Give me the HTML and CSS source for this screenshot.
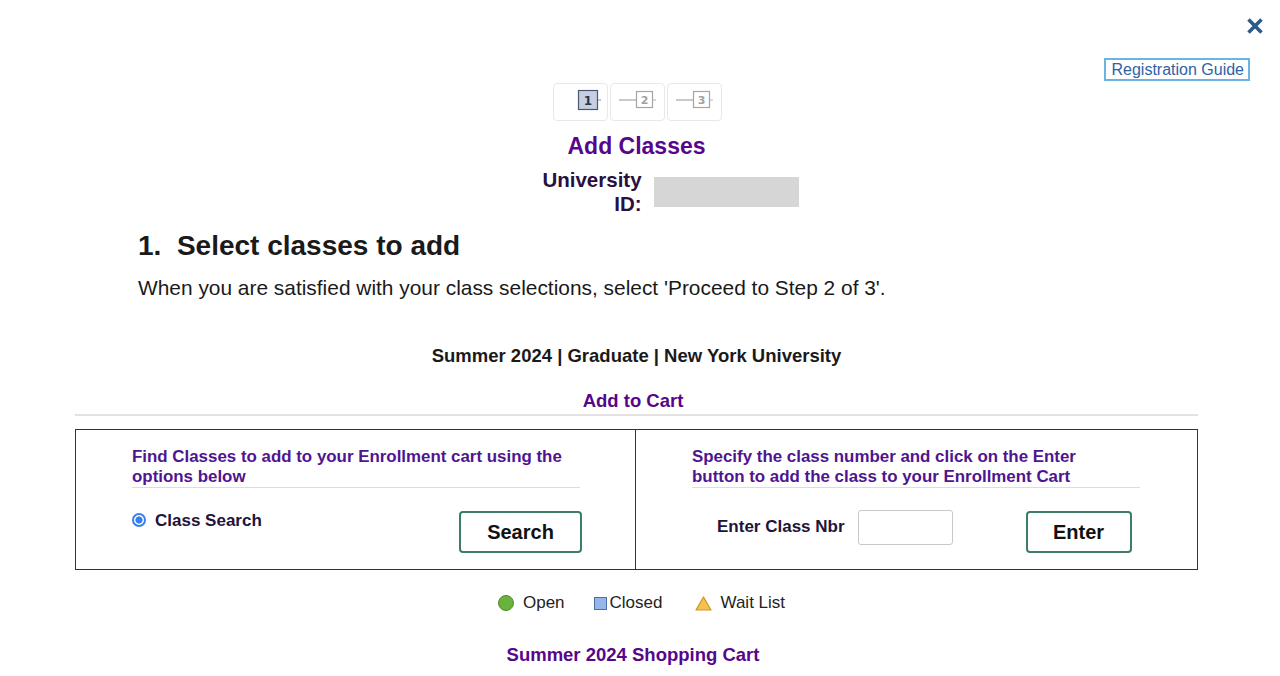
FILE: index.html
```html
<!DOCTYPE html>
<html>
<head>
	<title>Add Classes</title>
	<meta http-equiv="content-type" content="text/html; charset=UTF-8">
	<link rel="stylesheet" href="styles.css">
</head>
<body>
	<div class="topbar">
		<button class="close-btn" aria-label="Close">
			<svg width="18" height="18" viewBox="0 0 18 18">
				<path d="M2.5 2.5 L15.5 15.5 M15.5 2.5 L2.5 15.5" stroke="#2c5a8a" stroke-width="3.6" fill="none"/>
			</svg>
		</button>
	</div>
	<div class="guide-row">
		<a class="guide-link" href="#">Registration Guide</a>
	</div>

	<main class="content">
		<div class="steps">
			<div class="step">
				<svg width="53" height="36" viewBox="0 0 53 36">
					<rect x="24.5" y="6.5" width="19" height="19" fill="#c5cfe2" stroke="#4d5870" stroke-width="1.2"/>
					<line x1="44" y1="16" x2="47" y2="16" stroke="#8a93a6"/>
					<text x="34" y="20.5" text-anchor="middle" class="step-num active">1</text>
				</svg>
			</div>
			<div class="step">
				<svg width="53" height="36" viewBox="0 0 53 36">
					<line x1="8" y1="16" x2="25" y2="16" stroke="#a5a5a5" stroke-width="1.2"/>
					<rect x="25.5" y="7.5" width="16" height="16" fill="#fff" stroke="#a5a5a5" stroke-width="1.2"/>
					<line x1="42" y1="16" x2="45" y2="16" stroke="#b5b5b5"/>
					<text x="33.5" y="20" text-anchor="middle" class="step-num">2</text>
				</svg>
			</div>
			<div class="step">
				<svg width="53" height="36" viewBox="0 0 53 36">
					<line x1="8" y1="16" x2="25" y2="16" stroke="#a5a5a5" stroke-width="1.2"/>
					<rect x="25.5" y="7.5" width="16" height="16" fill="#fff" stroke="#a5a5a5" stroke-width="1.2"/>
					<line x1="42" y1="16" x2="45" y2="16" stroke="#b5b5b5"/>
					<text x="33.5" y="20" text-anchor="middle" class="step-num">3</text>
				</svg>
			</div>
		</div>

		<h1 class="page-title">Add Classes</h1>

		<div class="uid-row">
			<div class="uid-label">University<br>ID:</div>
			<div class="uid-value"></div>
		</div>

		<section class="intro">
			<h2>1.&nbsp; Select classes to add</h2>
			<p>When you are satisfied with your class selections, select 'Proceed to Step 2 of 3'.</p>
		</section>

		<div class="term">Summer 2024 | Graduate | New York University</div>

		<h3 class="section-title">Add to Cart</h3>

		<div class="cart-box">
			<div class="cart-cell">
				<div class="cell-inner">
					<div class="cell-head">Find Classes to add to your Enrollment cart using the options below</div>
					<div class="cell-row">
						<label class="radio"><span class="radio-dot"></span>Class Search</label>
						<button class="btn">Search</button>
					</div>
				</div>
			</div>
			<div class="cart-cell">
				<div class="cell-inner">
					<div class="cell-head">Specify the class number and click on the Enter button to add the class to your Enrollment Cart</div>
					<div class="cell-row enter-row">
						<label class="nbr-label" for="nbr">Enter Class Nbr</label>
						<input id="nbr" class="nbr-input" type="text">
						<button class="btn btn-enter">Enter</button>
					</div>
				</div>
			</div>
		</div>

		<div class="legend">
			<span class="legend-item"><span class="ico-open"></span>Open</span>
			<span class="legend-item closed"><span class="ico-closed"></span>Closed</span>
			<span class="legend-item wait">
				<svg class="ico-wait" width="17" height="15" viewBox="0 0 17 15">
					<path d="M8.5 1 L16 14 L1 14 Z" fill="#f4c24f" stroke="#c9952c" stroke-width="1.2" stroke-linejoin="round"/>
				</svg>Wait List</span>
		</div>

		<h3 class="cart-title">Summer 2024 Shopping Cart</h3>
	</main>
</body>
</html>
```

FILE: styles.css
```css
*{
	box-sizing: border-box;
}

body{
	margin: 0;
	font-family: "Liberation Sans", Arial, sans-serif;
	color: #1a1a1a;
	background: #fff;
}

.topbar{
	display: flex;
	justify-content: flex-end;
	padding: 17px 16px 0 0;
}

.close-btn{
	border: none;
	background: none;
	padding: 0;
	width: 18px;
	height: 18px;
	display: block;
}

.close-btn svg{
	display: block;
}

.guide-row{
	display: flex;
	justify-content: flex-end;
	padding-right: 30px;
	margin-top: 23px;
}

.guide-link{
	display: block;
	font-size: 16px;
	line-height: 19px;
	color: #2e62a5;
	text-decoration: none;
	border: 2px solid #6ab4e0;
	padding: 0 4px 0 5px;
}

.content{
	width: 1123px;
	margin-left: 75px;
}

/* step indicator */
.steps{
	display: flex;
	justify-content: center;
	gap: 2px;
	margin-top: 2px;
	padding-left: 2px;
}

.step{
	width: 55px;
	height: 38px;
	border: 1px solid #e8e8e8;
	border-radius: 4px;
}

.step svg{
	display: block;
}

.step-num{
	font-family: "DejaVu Sans", sans-serif;
	font-size: 11px;
	font-weight: bold;
	fill: #a0a0a0;
}

.step-num.active{
	font-size: 12px;
	fill: #2b3445;
}

.page-title{
	margin: 11px 0 0;
	text-align: center;
	font-size: 23px;
	line-height: 28px;
	color: #57068c;
}

.uid-row{
	display: flex;
	justify-content: center;
	align-items: flex-start;
	gap: 12px;
	padding-left: 68px;
	margin-top: 8px;
}

.uid-label{
	text-align: right;
	font-size: 20.5px;
	font-weight: bold;
	line-height: 24px;
	color: #2a1040;
}

.uid-value{
	width: 145px;
	height: 30px;
	margin-top: 9px;
	background: #d6d6d6;
}

.intro{
	padding-left: 63px;
	margin-top: 15px;
}

.intro h2{
	margin: 0;
	font-size: 28px;
	line-height: 30px;
	color: #1a1a1a;
}

.intro p{
	margin: 15px 0 0;
	font-size: 20.9px;
	line-height: 24px;
}

.term{
	margin-top: 45px;
	text-align: center;
	font-size: 18.5px;
	font-weight: bold;
	line-height: 22px;
}

.section-title{
	margin: 23px 0 0;
	padding: 0 7px 2px 0;
	border-bottom: 2px solid #e2e2e2;
	text-align: center;
	font-size: 18.5px;
	line-height: 22px;
	color: #57068c;
}

/* add to cart box */
.cart-box{
	margin-top: 13px;
	display: grid;
	grid-template-columns: 560px 1fr;
	border: 1px solid #333;
}

.cart-cell{
	padding: 17px 0 16px 56px;
}

.cart-cell:first-child{
	border-right: 1px solid #333;
}

.cell-inner{
	width: 450px;
}

.cell-head{
	width: 448px;
	padding-right: 10px;
	font-size: 16.9px;
	font-weight: bold;
	line-height: 20px;
	color: #4f1590;
	border-bottom: 1px solid #dcdcdc;
}

.cell-row{
	display: flex;
	justify-content: space-between;
	align-items: flex-start;
	margin-top: 22px;
}

.radio{
	display: flex;
	align-items: center;
	gap: 9px;
	font-size: 17px;
	font-weight: bold;
	line-height: 20px;
	color: #22133a;
	margin-top: 1px;
}

.radio-dot{
	width: 14px;
	height: 14px;
	border-radius: 50%;
	border: 2px solid #3a7ff0;
	background: radial-gradient(circle, #3a7ff0 0 3.3px, #fff 3.9px);
	margin-top: -3px;
}

.btn{
	margin-top: 1px;
	width: 123px;
	height: 42px;
	border: 2px solid #3d7d68;
	border-radius: 4px;
	background: #fff;
	font-family: "Liberation Sans", Arial, sans-serif;
	font-size: 20px;
	font-weight: bold;
	color: #111;
	padding: 0;
}

.enter-row{
	justify-content: flex-start;
}

.nbr-label{
	margin: 7px 0 0 25px;
	font-size: 17px;
	font-weight: bold;
	line-height: 20px;
	color: #22133a;
}

.nbr-input{
	margin-left: 13px;
	width: 95px;
	height: 35px;
	border: 1px solid #c8c8c8;
	border-radius: 3px;
	outline: none;
}

.btn-enter{
	margin-left: 73px;
	width: 106px;
}

/* legend */
.legend{
	margin-top: 23px;
	display: flex;
	justify-content: center;
	align-items: center;
	padding-left: 10px;
	font-size: 17px;
	line-height: 20px;
	color: #222;
}

.legend-item{
	display: flex;
	align-items: center;
}

.legend-item.closed{
	margin-left: 29px;
}

.legend-item.wait{
	margin-left: 33px;
}

.ico-open{
	width: 16px;
	height: 16px;
	border-radius: 50%;
	background: #6ab23e;
	border: 1px solid #4d8a2a;
	margin-right: 9px;
}

.ico-closed{
	width: 13px;
	height: 13px;
	background: #94b6e8;
	border: 1px solid #4a6fa8;
	margin-right: 3px;
}

.ico-wait{
	display: block;
	margin-right: 8px;
}

.cart-title{
	margin: 31px 0 0;
	padding-right: 7px;
	text-align: center;
	font-size: 18.5px;
	line-height: 22px;
	color: #57068c;
}
```
